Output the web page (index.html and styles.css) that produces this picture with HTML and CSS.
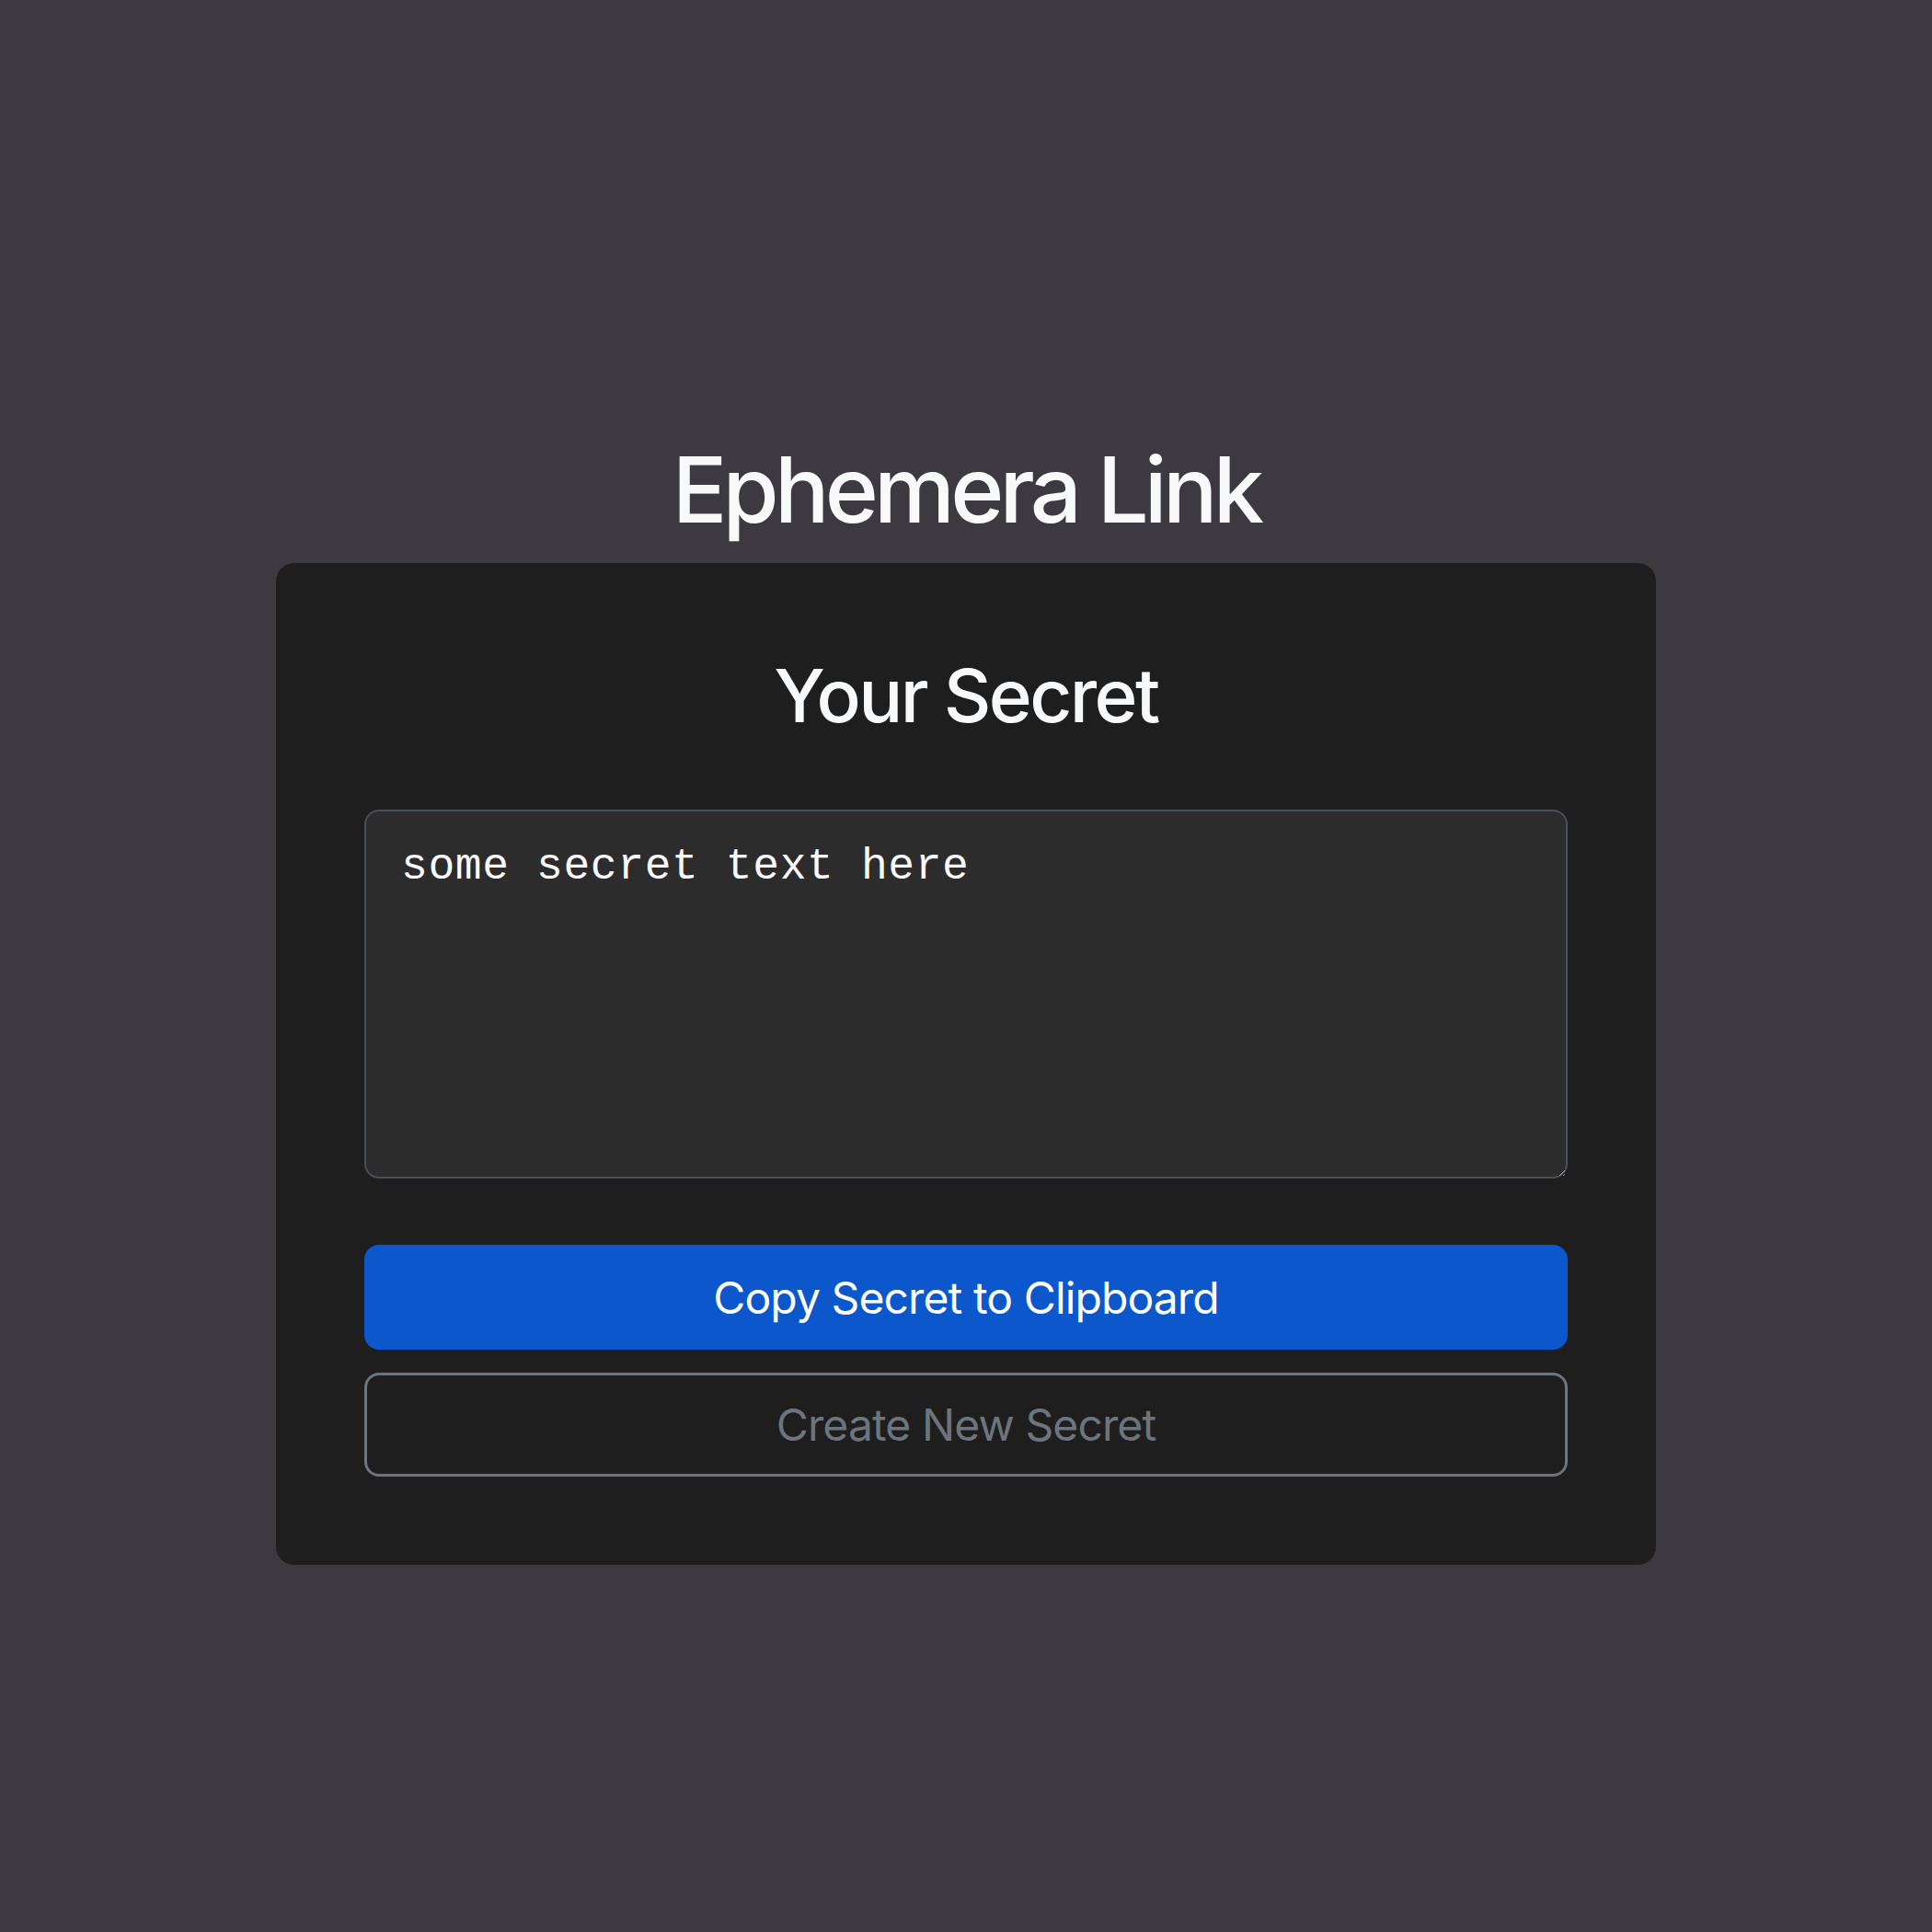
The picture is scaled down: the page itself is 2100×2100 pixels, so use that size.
FILE: index.html
```html
<!DOCTYPE html>
<html lang="en">
<head>
<meta charset="utf-8">
<title>Ephemera Link</title>
<link rel="stylesheet" href="styles.css">
</head>
<body>
<main class="page">
  <h1 class="brand">Ephemera Link</h1>
  <section class="card">
    <h2 class="card-title">Your Secret</h2>
    <textarea class="secret" readonly>some secret text here</textarea>
    <div class="actions">
      <button class="btn btn-primary" type="button">Copy Secret to Clipboard</button>
      <button class="btn btn-outline" type="button">Create New Secret</button>
    </div>
  </section>
</main>
</body>
</html>
```

FILE: styles.css
```css
html, body {
  margin: 0;
  padding: 0;
}
body {
  background: #3c3a40;
  font-family: Inter, "Noto Sans", "Liberation Sans", sans-serif;
  color: #f8f9fa;
  min-height: 2100px;
}
.page {
  display: flex;
  flex-direction: column;
  align-items: center;
  padding-top: 472px;
}
.brand {
  margin: 0 0 20px;
  font-size: 99px;
  line-height: 120px;
  font-weight: 500;
  letter-spacing: -4.8px;
  color: #f8f9fa;
}
.card {
  box-sizing: border-box;
  width: 1500px;
  background: #1e1e1e;
  border-radius: 20px;
  padding: 96px;
  display: flex;
  flex-direction: column;
}
.card-title {
  margin: 0 0 76px;
  text-align: center;
  font-size: 80px;
  line-height: 96px;
  font-weight: 500;
  letter-spacing: -2.6px;
  color: #f8f9fa;
}
.secret {
  box-sizing: border-box;
  width: 100%;
  height: 401px;
  margin: 0;
  background: #2c2c2c;
  border: 2px solid #4a5058;
  border-radius: 16px;
  padding: 24px 38px 20px;
  font-family: "Liberation Mono", "DejaVu Sans Mono", monospace;
  font-size: 48px;
  line-height: 72px;
  letter-spacing: 0.6px;
  color: #f8f9fa;
  outline: none;
}
.actions {
  display: flex;
  flex-direction: column;
  gap: 25px;
  margin-top: 72px;
}
.btn {
  box-sizing: border-box;
  width: 100%;
  border-radius: 16px;
  font-family: Inter, "Noto Sans", "Liberation Sans", sans-serif;
  font-size: 48px;
  font-weight: 400;
  letter-spacing: -0.9px;
  cursor: pointer;
}
.btn-primary {
  height: 114px;
  background: #0b57cb;
  border: none;
  color: #ffffff;
}
.btn-outline {
  height: 113px;
  background: transparent;
  border: 3px solid #6c757d;
  color: #6c757d;
}
```
